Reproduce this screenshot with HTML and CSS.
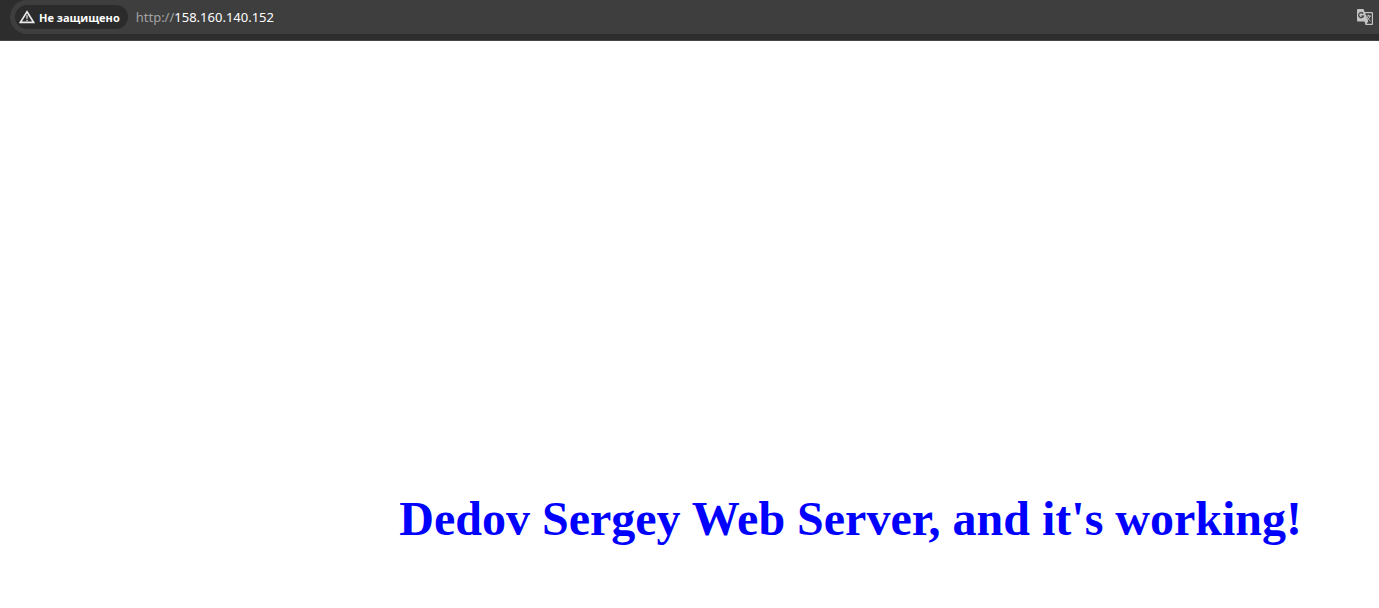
FILE: index.html
```html
<!DOCTYPE html>
<html lang="ru">
<head>
<meta charset="utf-8">
<title>158.160.140.152</title>
<link rel="stylesheet" href="styles.css">
</head>
<body>
<header class="toolbar">
  <div class="address-bar">
    <button class="security" type="button">
      <svg class="security-icon" viewBox="0 0 16 14" aria-hidden="true">
        <path d="M8 1.8 14.6 12.3H1.4Z" fill="none" stroke="#e8e8e8" stroke-width="1.7"/>
        <path d="M8 5.2V8.8M8 9.7V11.2" stroke="#c8c8c8" stroke-width="1.5"/>
      </svg>
      <span>Не защищено</span>
    </button>
    <a class="url" href="http://158.160.140.152"><span class="scheme">http://</span>158.160.140.152</a>
    <button class="translate" type="button" aria-label="Перевести">
      <svg class="translate-icon" viewBox="0 0 18 18" aria-hidden="true">
        <path d="M2 1H7.5L8.7 4H16Q17 4 17 5V16Q17 17 16 17H9.5L8.5 13.5H2Q1 13.5 1 12.5V2Q1 1 2 1Z" fill="#c3c3c3"/>
        <path d="M9.2 5.2H15.8V15.8H10.5L12.3 13.5Z" fill="#3e3e3e"/>
        <path d="M7.2 5.6A2.5 2.5 0 1 0 7.5 8H5.2" fill="none" stroke="#3e3e3e" stroke-width="1.2"/>
        <path d="M10.2 8H15M12.5 6.8V8M14 8Q13.2 11 11 12.3M11.2 9Q12.5 11.7 14.6 13.2" fill="none" stroke="#c3c3c3" stroke-width="1"/>
      </svg>
    </button>
  </div>
</header>
<main class="page">
  <h1 class="message">Dedov Sergey Web Server, and it's working!</h1>
</main>
</body>
</html>
```
FILE: styles.css
```css
* {
  box-sizing: border-box;
}

body {
  display: flex;
  flex-direction: column;
  min-height: 100vh;
  margin: 0;
  background: #fff;
}

.toolbar {
  padding: 0 0 6px 10px;
  background: #2d2d2d;
  border-bottom: 1px solid #454545;
  font-family: "Noto Sans", sans-serif;
}

.address-bar {
  display: flex;
  align-items: center;
  height: 34px;
  padding: 0 5px;
  background: #3e3e3e;
  border-radius: 17px 0 0 17px;
}

.security {
  display: flex;
  align-items: center;
  gap: 4px;
  height: 24px;
  padding: 0 8px 0 4px;
  border: 0;
  border-radius: 12px;
  background: #2b2b2b;
  color: #fff;
  font-family: "Open Sans", sans-serif;
  font-size: 11px;
  font-weight: 700;
}

.security-icon {
  width: 16px;
  height: 14px;
}

.url {
  margin-left: 8px;
  color: #fff;
  font-size: 13px;
  text-decoration: none;
}

.scheme {
  color: #a3a3a3;
}

.translate {
  margin-left: auto;
  padding: 0;
  border: 0;
  background: none;
}

.translate-icon {
  display: block;
  width: 18px;
  height: 18px;
}

.page {
  display: flex;
  flex: 1;
  align-items: flex-end;
  justify-content: flex-end;
  padding: 0 77px 61px;
}

.message {
  margin: 0;
  color: #00f;
  font-family: "Liberation Serif", serif;
  font-size: 48px;
  line-height: 56px;
}
```
